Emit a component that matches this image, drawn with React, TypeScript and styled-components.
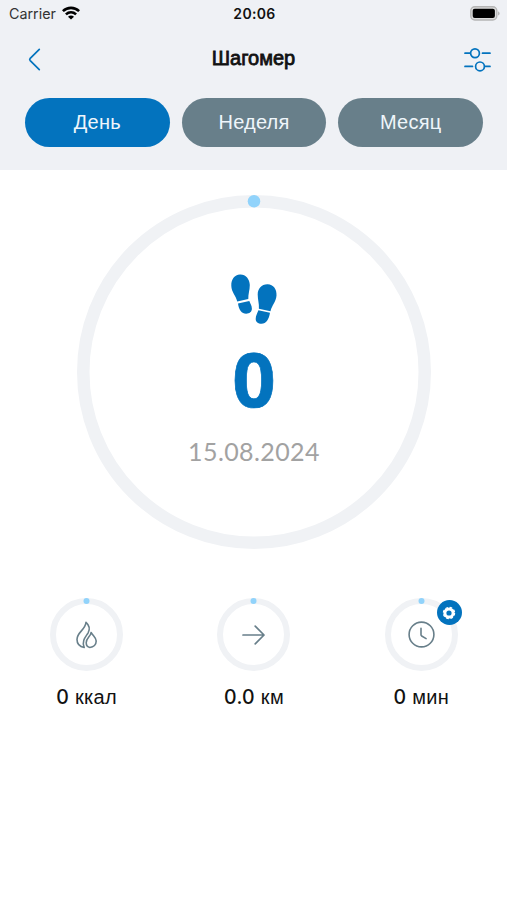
import React from 'react';
import styled, { createGlobalStyle } from 'styled-components';

const blue = '#0373be';
const slate = '#687f8a';
const track = '#f0f2f5';
const dot = '#91d3fb';

const GlobalStyle = createGlobalStyle`
  * { box-sizing: border-box; }
  body { margin: 0; background: #fff; font-family: "Liberation Sans", Arial, sans-serif; color: #111; }
  button { font: inherit; border: 0; padding: 0; background: none; }
  svg { display: block; }
`;

const Screen = styled.main`
  width: 507px;
  height: 900px;
  display: flex;
  flex-direction: column;
  overflow: hidden;
`;

const Header = styled.header`
  height: 170px;
  background: #eff1f5;
`;

const StatusBar = styled.div`
  height: 28px;
  padding: 0 7px 2px 9px;
  display: grid;
  grid-template-columns: 1fr auto 1fr;
  align-items: center;
  font-family: Inter, sans-serif;
`;

const Carrier = styled.div`
  display: flex;
  align-items: center;
  gap: 6px;
  font-size: 14.3px;
  color: #333;
`;

const Clock = styled.time`
  font-size: 14px;
  font-weight: 600;
  letter-spacing: 0.35px;
`;

const Battery = styled.div`
  justify-self: end;
`;

const NavBar = styled.div`
  height: 62px;
  padding: 1px 16px 0;
  display: grid;
  grid-template-columns: 1fr auto 1fr;
  align-items: center;
`;

const IconButton = styled.button<{ $end?: boolean }>`
  justify-self: ${p => (p.$end ? 'end' : 'start')};
  margin-left: ${p => (p.$end ? 0 : 12)}px;
  color: ${blue};
`;

const Title = styled.h1`
  margin: 0 0 4px;
  font-size: 20px;
  line-height: 24px;
  font-weight: 400;
  -webkit-text-stroke: 0.8px #111;
`;

const Tabs = styled.nav`
  display: flex;
  gap: 12px;
  padding: 8px 24px 0 25px;
`;

const Tab = styled.button<{ $active?: boolean }>`
  flex: 1;
  height: 49px;
  border-radius: 25px;
  font-size: 20px;
  letter-spacing: 0.2px;
  color: #eff6fb;
  background: ${p => (p.$active ? blue : slate)};
`;

const Dial = styled.div<{ $size: number }>`
  width: ${p => p.$size}px;
  height: ${p => p.$size}px;
  display: grid;
  place-items: center;
  position: relative;
`;

const RingLayer = styled.svg`
  position: absolute;
  inset: 0;
`;

const Summary = styled.section`
  padding: 25px 0 0 1px;
  display: flex;
  justify-content: center;
`;

const SummaryBody = styled.div`
  height: 100%;
  padding-top: 79px;
  display: flex;
  flex-direction: column;
  align-items: center;
`;

const Steps = styled.div`
  margin-top: 13px;
  height: 80px;
  font: 700 76px/80px "Noto Sans", sans-serif;
  -webkit-text-stroke: 0.7px ${blue};
  color: ${blue};
`;

const DateText = styled.div`
  margin-top: 18px;
  font: 400 25px/30px Lato, sans-serif;
  letter-spacing: 0.4px;
  color: #a2a2a2;
`;

const Metrics = styled.section`
  margin-top: 49px;
  padding: 0 2px 0 3px;
  display: grid;
  grid-template-columns: repeat(3, 1fr);
`;

const Metric = styled.div`
  display: flex;
  flex-direction: column;
  align-items: center;
`;

const Label = styled.div`
  margin-top: 14px;
  font-size: 20px;
  line-height: 24px;
  letter-spacing: 0.3px;
  white-space: pre;
`;

const Value = styled.span`
  font-family: Inter, sans-serif;
  font-weight: 500;
  font-size: 19.5px;
`;

const Badge = styled.div`
  position: absolute;
  right: -4px;
  top: 2px;
  width: 25px;
  height: 25px;
  border-radius: 50%;
  display: grid;
  place-items: center;
  background: ${blue};
`;

function Ring({ size, stroke, dotSize }: { size: number; stroke: number; dotSize: number }) {
  return (
    <RingLayer width={size} height={size}>
      <circle cx={size / 2} cy={size / 2} r={(size - stroke) / 2} fill="none" stroke={track} strokeWidth={stroke} />
      <circle cx={size / 2} cy={stroke / 2} r={dotSize / 2} fill={dot} />
    </RingLayer>
  );
}

const WifiIcon = () => (
  <svg width="18" height="14" viewBox="0 0 18 14" fill="none" stroke="#000" strokeWidth="2.6">
    <path d="M0.9 5.1C5.5.8 12.5.8 17.1 5.1" />
    <path d="M3.9 8.4c3-2.7 7.2-2.7 10.2 0" />
    <path d="M9 13.5 6 10.7c1.8-1.5 4.2-1.5 6 0z" fill="#000" stroke="none" />
  </svg>
);

const BatteryIcon = () => (
  <svg width="30" height="15" viewBox="0 0 30 15">
    <rect x=".8" y=".8" width="26" height="13.2" rx="4" fill="#ddd" stroke="#b5b5b5" strokeWidth="1.4" />
    <rect x="2.7" y="2.7" width="22.2" height="9.4" rx="2" fill="#000" />
    <path d="M28.2 5.2c1.8.8 1.8 3.6 0 4.4z" fill="#aaa" />
  </svg>
);

const BackIcon = () => (
  <svg width="13" height="23" viewBox="0 0 13 23" fill="none" stroke="currentColor" strokeWidth="1.7" strokeLinecap="round" strokeLinejoin="round">
    <path d="M11.3 1.3 2.2 10.4q-1 1.1 0 2.2l9.1 9.1" />
  </svg>
);

const FiltersIcon = () => (
  <svg width="27" height="25" viewBox="0 0 27 25" fill="none" stroke="currentColor" strokeWidth="1.7" strokeLinecap="round">
    <path d="M1 6.2h5M18.5 6.2H26M1 19.4h7.5M21 19.4h5" />
    <circle cx="11" cy="6.2" r="4.4" />
    <circle cx="16" cy="19.4" r="4.4" />
  </svg>
);

const FootprintsIcon = () => (
  <svg width="46" height="51" viewBox="0 0 46 51" fill={blue}>
    <path d="M9 .5C14.5.2 18.7 5 18.8 11c0 5.2-1.7 8.8-1.5 14.1L6.2 27.4C5.1 21.6.4 18.3.3 11.7.2 5.2 3.5.8 9 .5Z" />
    <path d="m7 29.4 11.3-2.3c1.1 2.6 2.6 4.7 2.6 7.7 0 3.1-2.4 4.9-5.7 4.9-4.5 0-7.4-4.2-8.2-10.3Z" />
    <path d="M36.7 10.3c5.6.2 9.2 5 8.8 11.2-.4 6.5-4.7 9.7-6 15.7l-11.6-2.5c.4-5.1-1.2-9-1.2-14.2 0-5.9 4-10.4 10-10.2Z" />
    <path d="m27.4 36.3 11.6 2.5c-1 6.6-3.8 10.9-8.5 10.9-3.4 0-5.9-1.8-5.8-5 0-3 1.7-5.5 2.7-8.4Z" />
  </svg>
);

const FlameIcon = () => (
  <svg width="21" height="28" viewBox="0 0 21 28" fill="none" stroke={slate} strokeWidth="1.6" strokeLinejoin="round" strokeLinecap="round">
    <path d="M8.2 26.5C3.5 25.6 1 22.4 1 18.5 1 11 9.5 9 10 1.3c3.4 3 4 7.2 2 10.8C9.4 16 5.5 20 8.2 26.5Z" />
    <path d="M15.1 11.5c-.5 4.3-4.9 5.3-4.9 10.3 0 2.5 1.4 4.3 3.7 4.7 3.7-.4 6.3-3 6.3-6.4 0-3.4-3-5-5.1-8.6Z" />
  </svg>
);

const ArrowIcon = () => (
  <svg width="23" height="20" viewBox="0 0 23 20" fill="none" stroke={slate} strokeWidth="1.7" strokeLinecap="round" strokeLinejoin="round">
    <path d="M1 10h21M13.2 1.2 22 10l-8.8 8.8" />
  </svg>
);

const ClockIcon = () => (
  <svg width="27" height="27" viewBox="0 0 27 27" fill="none" stroke={slate} strokeWidth="1.6" strokeLinecap="round" strokeLinejoin="round">
    <circle cx="13.5" cy="13.5" r="12.4" />
    <path d="M13 7.4v6.4q0 .8.7 1.2l4.4 2.6" />
  </svg>
);

const GearIcon = () => (
  <svg width="14" height="14" viewBox="-7 -7 14 14">
    <circle r="4.1" fill="none" stroke="#fff" strokeWidth="3" />
    <circle r="5.6" fill="none" stroke="#fff" strokeWidth="1.2" strokeDasharray="2.6 1.8" />
  </svg>
);

const tabs = ['День', 'Неделя', 'Месяц'];

const metrics = [
  { value: '0', unit: 'ккал', icon: <FlameIcon /> },
  { value: '0.0', unit: 'км', icon: <ArrowIcon /> },
  { value: '0', unit: 'мин', icon: <ClockIcon />, settings: true },
];

export default function App() {
  return (
    <Screen>
      <GlobalStyle />
      <Header>
        <StatusBar>
          <Carrier>Carrier <WifiIcon /></Carrier>
          <Clock>20:06</Clock>
          <Battery><BatteryIcon /></Battery>
        </StatusBar>
        <NavBar>
          <IconButton aria-label="Назад"><BackIcon /></IconButton>
          <Title>Шагомер</Title>
          <IconButton $end aria-label="Настройки"><FiltersIcon /></IconButton>
        </NavBar>
        <Tabs>
          {tabs.map((t, i) => <Tab key={t} $active={i === 0}>{t}</Tab>)}
        </Tabs>
      </Header>
      <Summary>
        <Dial $size={354}>
          <Ring size={354} stroke={12.5} dotSize={12.5} />
          <SummaryBody>
            <FootprintsIcon />
            <Steps>0</Steps>
            <DateText>15.08.2024</DateText>
          </SummaryBody>
        </Dial>
      </Summary>
      <Metrics>
        {metrics.map(m => (
          <Metric key={m.unit}>
            <Dial $size={73}>
              <Ring size={73} stroke={6} dotSize={6} />
              {m.icon}
              {m.settings && <Badge><GearIcon /></Badge>}
            </Dial>
            <Label><Value>{m.value}</Value> {m.unit}</Label>
          </Metric>
        ))}
      </Metrics>
    </Screen>
  );
}
